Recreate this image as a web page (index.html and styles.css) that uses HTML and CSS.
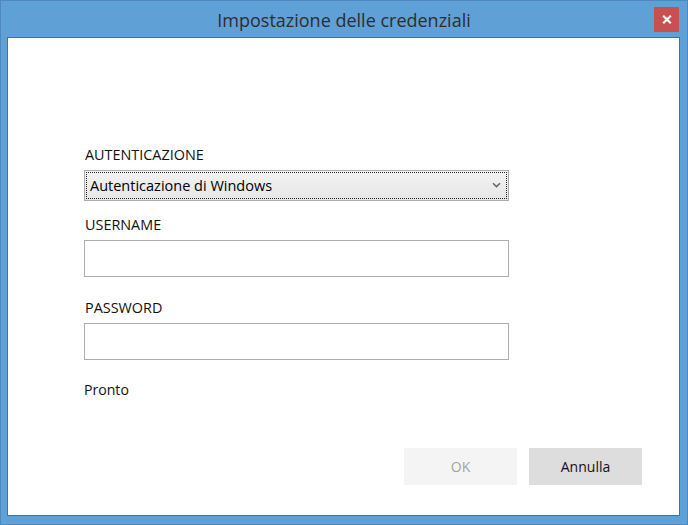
FILE: index.html
```html
<!DOCTYPE html>
<html lang="it">
<head>
<meta charset="utf-8">
<title>Impostazione delle credenziali</title>
<link rel="stylesheet" href="styles.css">
</head>
<body>
<div class="window">
  <div class="titlebar">
    <span class="title">Impostazione delle credenziali</span>
    <button class="close" aria-label="Chiudi">
      <svg width="10" height="9" viewBox="0 0 10 9"><path d="M1.2 0.8 L8.8 8.2 M8.8 0.8 L1.2 8.2" stroke="#fff" stroke-width="2.2" fill="none"/></svg>
    </button>
  </div>
  <div class="content">
    <div class="form">
      <div class="label">AUTENTICAZIONE</div>
      <div class="combo">
        <span>Autenticazione di Windows</span>
        <svg class="chev" width="9" height="6" viewBox="0 0 9 6"><path d="M1 1.2 L4.5 4.6 L8 1.2" stroke="#666" stroke-width="1.5" fill="none"/></svg>
      </div>
      <div class="label gap-big">USERNAME</div>
      <div class="input"></div>
      <div class="label gap-bigger">PASSWORD</div>
      <div class="input"></div>
      <div class="status">Pronto</div>
    </div>
    <div class="buttons">
      <button class="btn btn-disabled">OK</button>
      <button class="btn">Annulla</button>
    </div>
  </div>
</div>
</body>
</html>
```
FILE: styles.css
```css
html, body {
  margin: 0;
  padding: 0;
}
body {
  width: 688px;
  height: 525px;
  overflow: hidden;
  font-family: "Open Sans", "Noto Sans", sans-serif;
}
.window {
  box-sizing: border-box;
  width: 688px;
  height: 525px;
  background: #5fa0d6;
  border: 1px solid #4f88bf;
  padding: 0 7px 8px 6px;
  display: flex;
  flex-direction: column;
}
.titlebar {
  position: relative;
  height: 36px;
  flex: none;
  display: flex;
  align-items: center;
  justify-content: center;
}
.title {
  font-size: 18px;
  color: #2e2e2e;
  margin-top: 1px;
  margin-left: 1px;
}
.close {
  position: absolute;
  right: 1px;
  top: 6px;
  width: 25px;
  height: 25px;
  border: none;
  padding: 0;
  background: #c75050;
  display: flex;
  align-items: center;
  justify-content: center;
}
.content {
  flex: 1;
  background: #fff;
  border: 1px solid #3e73a6;
  display: flex;
  flex-direction: column;
  padding: 108px 37px 30px 76px;
}
.form {
  width: 425px;
  display: flex;
  flex-direction: column;
}
.label {
  font-size: 14.4px;
  line-height: 18px;
  color: #111;
  padding-left: 1px;
}
.gap-big { margin-top: 15px; }
.gap-bigger { margin-top: 22px; }
.combo {
  box-sizing: border-box;
  margin-top: 6px;
  height: 31px;
  border: 1px solid #acacac;
  background: linear-gradient(#f3f3f3, #e6e6e6);
  outline: 1px dotted #222;
  outline-offset: -3px;
  display: flex;
  align-items: center;
  justify-content: space-between;
  padding: 0 7px 0 5px;
  font-size: 14.5px;
  color: #000;
}
.chev {
  margin-bottom: 1px;
}
.input {
  box-sizing: border-box;
  margin-top: 6px;
  height: 37px;
  border: 1px solid #abadb3;
  background: #fff;
}
.status {
  margin-top: 21px;
  font-size: 14.1px;
  line-height: 18px;
  color: #111;
}
.buttons {
  margin-top: auto;
  display: flex;
  justify-content: flex-end;
  gap: 12px;
}
.btn {
  width: 113px;
  height: 37px;
  border: none;
  background: #dddddd;
  font-family: "Open Sans", "Noto Sans", sans-serif;
  font-size: 14px;
  color: #111;
  padding: 0;
}
.btn-disabled {
  background: #f4f4f4;
  color: #a3a3a3;
}
```
